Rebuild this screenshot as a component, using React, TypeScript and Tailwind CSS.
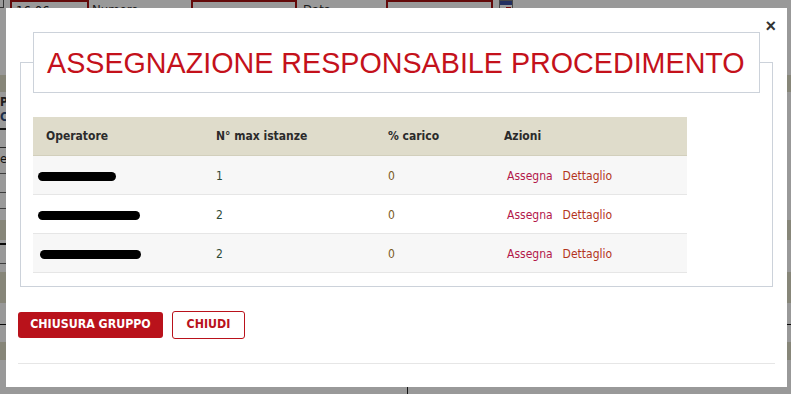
import React from 'react';

const operators = [
  { blob: 'w-[78px]', max: '1', load: '0', shade: true },
  { blob: 'w-[102px]', max: '2', load: '0', shade: false },
  { blob: 'w-[101px] ml-[2px]', max: '2', load: '0', shade: true },
];

const Line = ({ className }: { className: string }) => <div className={className}></div>;

const App = () => {
  return (
    <div className="relative w-[791px] h-[394px] overflow-hidden bg-white font-['DejaVu_Sans_Condensed','DejaVu_Sans',sans-serif]">
      {/* Underlying page (dimmed by the overlay) */}
      <div className="flex flex-col">
        <div className="h-[75px] flex items-start">
          <div className="w-[10px] h-[10px] border border-[#555] ml-[-6px] mt-[-2px]"></div>
          <div className="ml-[6px] w-[79px] h-[22px] border-2 border-[#a60f0f] pl-[4px] text-[13px] leading-[18px] text-[#222]">16:06</div>
          <div className="ml-[3px] w-[99px] text-[13px] leading-[20px] text-[#333]">Numero protocollo</div>
          <div className="w-[106px] h-[22px] border-2 border-[#a60f0f]"></div>
          <div className="ml-[6px] w-[83px] text-[13px] leading-[20px] text-[#333]">Data protocollo</div>
          <div className="w-[107px] h-[22px] border-2 border-[#a60f0f]"></div>
          <div className="ml-[6px] w-[14px] h-[14px] border border-[#777] flex flex-col">
            <div className="h-[4px] bg-[#3b4fa0]"></div>
            <div className="flex-1 flex justify-end items-end p-[1px]">
              <div className="w-[5px] h-[5px] border border-[#c01010]"></div>
            </div>
          </div>
        </div>
        <Line className="h-[17px] bg-[#e2dfca]" />
        <div className="h-[36px] pt-[3px] text-[12px] leading-[15px] font-bold text-[#333]">
          <div>Protocollo</div>
          <div className="text-[#2d4a7a]">Classifica</div>
        </div>
        <Line className="h-[2px] w-[300px] bg-[#222]" />
        <Line className="h-[17px]" />
        <Line className="h-px w-[300px] bg-[#444]" />
        <div className="h-[25px] pt-[4px] text-[13px] leading-[14px] text-[#222]">elenco</div>
        <Line className="h-px w-[300px] bg-[#666]" />
        <Line className="h-[18px]" />
        <Line className="h-px w-[300px] bg-[#666]" />
        <Line className="h-[15px]" />
        <Line className="h-px w-[300px] bg-[#666]" />
        <Line className="h-[11px]" />
        <Line className="h-[20px] bg-[#e2dfca]" />
        <Line className="h-[3px]" />
        <Line className="h-[2px] w-[300px] bg-[#111]" />
        <Line className="h-[18px]" />
        <Line className="h-px w-[300px] bg-[#666]" />
        <Line className="h-[8px]" />
        <Line className="h-[31px] bg-[#e2dfca]" />
        <Line className="h-[21px]" />
        <Line className="h-px bg-[#111]" />
        <Line className="h-[17px]" />
        <Line className="h-[18px] bg-[#e2dfca]" />
        <div className="h-[34px] pl-[407px]">
          <div className="w-px h-full bg-[#222]"></div>
        </div>
      </div>

      {/* Overlay */}
      <div className="absolute inset-0 bg-black/40"></div>

      {/* Modal */}
      <div className="absolute left-[6px] top-[8px] w-[781px] h-[379px] bg-white px-[12px]">
        <button className="absolute top-[9px] right-[11px] text-[18px] font-bold leading-none text-[#333] font-['Liberation_Sans',sans-serif]">
          ×
        </button>

        <fieldset className="mt-[24px] ml-[2px] w-[753px] border border-[#ccd2da] px-[12px] pt-[24px] pb-[13px]">
          <legend className="w-[727px] h-[61px] border border-[#ccd2da] px-[13px] pt-[1px] text-[28.7px] leading-[59px] text-[#c4111b] font-['Liberation_Sans',sans-serif]">
            ASSEGNAZIONE RESPONSABILE PROCEDIMENTO
          </legend>

          <table className="w-[654px] table-fixed border-collapse text-[12px] text-left">
            <colgroup>
              <col className="w-[170px]" />
              <col className="w-[172px]" />
              <col className="w-[116px]" />
              <col className="w-[196px]" />
            </colgroup>
            <thead>
              <tr className="h-[38px] bg-[#dfdccb] border-b border-[#d2cfbc] text-[#2b2b2b]">
                <th className="pl-[13px] font-bold">Operatore</th>
                <th className="pl-[13px] font-bold">N° max istanze</th>
                <th className="pl-[13px] font-bold">% carico</th>
                <th className="pl-[13px] font-bold">Azioni</th>
              </tr>
            </thead>
            <tbody>
              {operators.map((op, i) => (
                <tr key={i} className={`h-[39px] border-b border-[#e6e6e6] ${op.shade ? 'bg-[#f7f7f7]' : 'bg-white'}`}>
                  <td className="pl-[5px]">
                    <div className={`h-[9px] mt-[3px] rounded-full bg-black ${op.blob}`}></div>
                  </td>
                  <td className="pl-[13px] pt-[2px] text-[#2f4a36]">{op.max}</td>
                  <td className="pl-[13px] pt-[2px] text-[#7a5a1c]">{op.load}</td>
                  <td className="pl-[16px] pt-[2px]">
                    <a href="#" className="text-[#b3174a]">Assegna</a>
                    <a href="#" className="ml-[10px] text-[#b3341c]">Dettaglio</a>
                  </td>
                </tr>
              ))}
            </tbody>
          </table>
        </fieldset>

        <div className="mt-[24px] flex items-center gap-[9px]">
          <button className="w-[145px] h-[26px] rounded-[3px] bg-[#b9121b] text-white text-[12.3px] font-bold">
            CHIUSURA GRUPPO
          </button>
          <button className="w-[73px] h-[28px] rounded-[3px] border border-[#b9121b] bg-white text-[#b9121b] text-[12.3px] font-bold">
            CHIUDI
          </button>
        </div>

        <div className="mt-[24px] h-px bg-[#e6e6e6]"></div>
      </div>
    </div>
  );
};

export default App;
